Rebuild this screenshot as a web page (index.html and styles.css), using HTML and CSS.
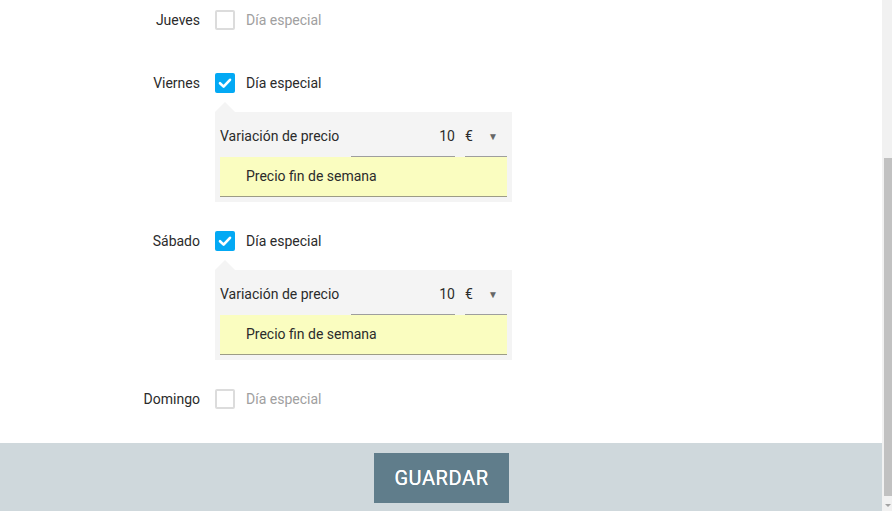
FILE: index.html
```html
<!DOCTYPE html>
<html lang="es">
<head>
<meta charset="utf-8">
<title>Días especiales</title>
<link rel="stylesheet" href="styles.css">
</head>
<body>
<div class="window">
  <main class="page">
    <section class="days">
      <div class="day">
        <div class="day-row">
          <span class="day-name">Jueves</span>
          <span class="check"></span>
          <span class="check-label">Día especial</span>
        </div>
      </div>

      <div class="day day-open">
        <div class="day-row">
          <span class="day-name">Viernes</span>
          <span class="check checked"><svg viewBox="0 0 20 20" width="20" height="20"><path d="M5 10.2 L8.6 13.6 L15 6.8" fill="none" stroke="#fff" stroke-width="2.6" stroke-linecap="round" stroke-linejoin="round"/></svg></span>
          <span class="check-label active">Día especial</span>
        </div>
        <div class="panel">
          <div class="price-row">
            <span class="price-label">Variación de precio</span>
            <span class="num-input">10</span>
            <span class="select">€<span class="caret">▼</span></span>
          </div>
          <div class="name-field">Precio fin de semana</div>
        </div>
      </div>

      <div class="day day-open">
        <div class="day-row">
          <span class="day-name">Sábado</span>
          <span class="check checked"><svg viewBox="0 0 20 20" width="20" height="20"><path d="M5 10.2 L8.6 13.6 L15 6.8" fill="none" stroke="#fff" stroke-width="2.6" stroke-linecap="round" stroke-linejoin="round"/></svg></span>
          <span class="check-label active">Día especial</span>
        </div>
        <div class="panel">
          <div class="price-row">
            <span class="price-label">Variación de precio</span>
            <span class="num-input">10</span>
            <span class="select">€<span class="caret">▼</span></span>
          </div>
          <div class="name-field">Precio fin de semana</div>
        </div>
      </div>

      <div class="day day-last">
        <div class="day-row">
          <span class="day-name">Domingo</span>
          <span class="check"></span>
          <span class="check-label">Día especial</span>
        </div>
      </div>
    </section>
    <footer class="footer">
      <button class="save">GUARDAR</button>
    </footer>
  </main>
  <div class="scrollbar">
    <div class="thumb"></div>
    <div class="arrow"></div>
  </div>
</div>
</body>
</html>
```

FILE: styles.css
```css
html, body {
  margin: 0;
  padding: 0;
  height: 100%;
  overflow: hidden;
}
body {
  font-family: Roboto, "Liberation Sans", Arial, sans-serif;
  font-size: 14px;
  color: #333;
  background: #fff;
}
.window {
  display: flex;
  height: 511px;
}
.page {
  flex: 1;
  display: flex;
  flex-direction: column;
  background: #fff;
}
.days {
  flex: 1;
  padding-top: 10px;
}
.day {
  margin-bottom: 43px;
}
.day-open {
  margin-bottom: 29px;
}
.day-last {
  margin-bottom: 0;
}
.day-row {
  display: flex;
  align-items: center;
  height: 20px;
}
.day-name {
  width: 200px;
  text-align: right;
  color: #2b2b2b;
  line-height: 20px;
}
.check {
  width: 20px;
  height: 20px;
  box-sizing: border-box;
  margin-left: 15px;
  border: 2px solid #dcdcdc;
  border-radius: 2px;
  display: flex;
  align-items: center;
  justify-content: center;
}
.check.checked {
  border: 0;
  background: #03a9f4;
}
.check-label {
  margin-left: 11px;
  color: #a0a0a0;
  line-height: 20px;
}
.check-label.active {
  color: #2b2b2b;
}
.panel {
  position: relative;
  margin: 19px 0 0 215px;
  width: 297px;
  box-sizing: border-box;
  padding: 0 5px 5px 5px;
  background: #f4f4f4;
}
.panel::before {
  content: "";
  position: absolute;
  left: 0;
  top: -10px;
  border-left: 10px solid transparent;
  border-right: 10px solid transparent;
  border-bottom: 10px solid #f4f4f4;
}
.price-row {
  display: flex;
  height: 45px;
}
.price-label {
  width: 131px;
  padding-top: 14px;
  line-height: 20px;
  color: #2b2b2b;
}
.num-input {
  width: 104px;
  box-sizing: border-box;
  padding-top: 14px;
  line-height: 20px;
  text-align: right;
  border-bottom: 1px solid #9e9e9e;
  color: #2b2b2b;
}
.select {
  margin-left: 10px;
  width: 42px;
  box-sizing: border-box;
  padding-top: 14px;
  line-height: 20px;
  border-bottom: 1px solid #9e9e9e;
  display: flex;
  justify-content: space-between;
  color: #2b2b2b;
}
.caret {
  font-size: 10px;
  color: #666;
  margin-right: 9px;
  line-height: 21px;
}
.name-field {
  height: 40px;
  box-sizing: border-box;
  padding-left: 26px;
  line-height: 38px;
  background: #fafdc0;
  border-bottom: 1px solid #9c9c86;
  color: #2b2b2b;
}
.footer {
  height: 68px;
  background: #cfd8dc;
  display: flex;
  justify-content: center;
  align-items: flex-start;
  padding-top: 10px;
  box-sizing: border-box;
}
.save {
  width: 135px;
  height: 50px;
  border: 0;
  padding: 0 0 0 1px;
  background: #607d8b;
  color: #fff;
  font-family: Roboto, "Liberation Sans", Arial, sans-serif;
  font-size: 20px;
  font-weight: 400;
  letter-spacing: 0.6px;
  text-shadow: 0 0 0.4px #fff;
}
.scrollbar {
  width: 10px;
  background: #f1f1f1;
  display: flex;
  flex-direction: column;
  align-items: flex-end;
}
.thumb {
  margin-top: 158px;
  width: 8px;
  height: 338px;
  background: #c1c1c1;
}
.arrow {
  margin-top: 8px;
  margin-right: 1px;
  border-left: 3px solid transparent;
  border-right: 3px solid transparent;
  border-top: 3px solid #a3a3a3;
}
```
